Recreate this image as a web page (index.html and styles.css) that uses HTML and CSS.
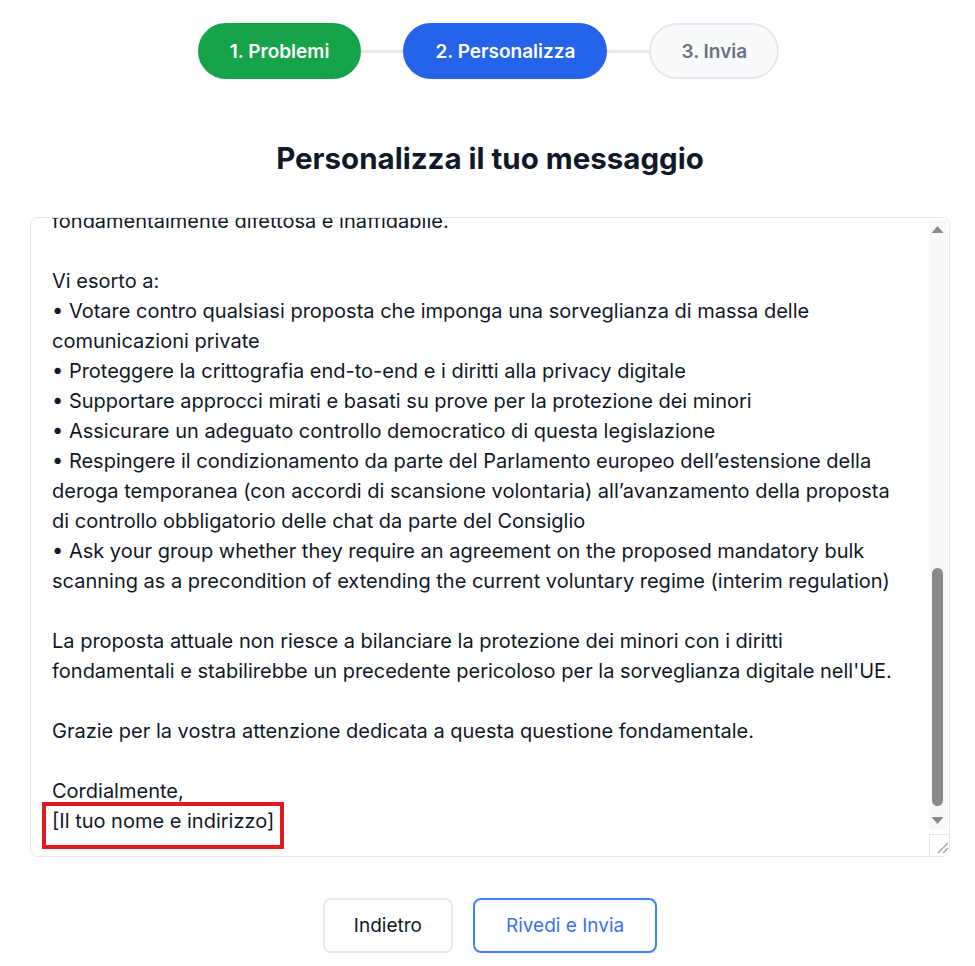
FILE: index.html
```html
<!DOCTYPE html>
<html lang="it">
<head>
<meta charset="UTF-8">
<meta name="viewport" content="width=device-width, initial-scale=1.0">
<title>Personalizza il tuo messaggio</title>
<link rel="stylesheet" href="styles.css">
</head>
<body>

<div class="steps">
  <div class="step done">1. Problemi</div>
  <div class="step-line"></div>
  <div class="step active">2. Personalizza</div>
  <div class="step-line"></div>
  <div class="step">3. Invia</div>
</div>

<h1 class="title">Personalizza il tuo messaggio</h1>

<div class="editor">
<textarea id="message" class="message" spellcheck="false">Gentile Membro del Parlamento europeo,

Le scrivo in qualità di cittadino/a preoccupato/a per la proposta di regolamento dell'UE volto a prevenire e combattere gli abusi sessuali sui minori (CSAR), spesso chiamata "Chat Control".

Pur condividendo pienamente l'obiettivo di proteggere i minori, ritengo che questa proposta, nella sua forma attuale, rappresenti una grave minaccia per i diritti fondamentali di tutti i cittadini europei.

La proposta imporrebbe la scansione automatica di tutte le comunicazioni private, compresi i messaggi cifrati end-to-end, trasformando di fatto ogni dispositivo in uno strumento di sorveglianza. Ciò comprometterebbe la sicurezza della crittografia, da cui dipendono giornalisti, medici, avvocati, imprese e le stesse istituzioni.

Esperti di sicurezza informatica, autorità per la protezione dei dati e il Servizio giuridico del Consiglio hanno espresso seri dubbi sulla compatibilità della proposta con la Carta dei diritti fondamentali dell'UE.

Inoltre, la tecnologia di rilevamento proposta genererebbe un numero enorme di falsi positivi, sommergendo le forze dell'ordine di segnalazioni inutili. La tecnologia è
fondamentalmente difettosa e inaffidabile.

Vi esorto a:
• Votare contro qualsiasi proposta che imponga una sorveglianza di massa delle comunicazioni private
• Proteggere la crittografia end-to-end e i diritti alla privacy digitale
• Supportare approcci mirati e basati su prove per la protezione dei minori
• Assicurare un adeguato controllo democratico di questa legislazione
• Respingere il condizionamento da parte del Parlamento europeo dell’estensione della deroga temporanea (con accordi di scansione volontaria) all’avanzamento della proposta di controllo obbligatorio delle chat da parte del Consiglio
• Ask your group whether they require an agreement on the proposed mandatory bulk scanning as a precondition of extending the current voluntary regime (interim regulation)

La proposta attuale non riesce a bilanciare la protezione dei minori con i diritti fondamentali e stabilirebbe un precedente pericoloso per la sorveglianza digitale nell'UE.

Grazie per la vostra attenzione dedicata a questa questione fondamentale.

Cordialmente,
[Il tuo nome e indirizzo]</textarea>
  <div class="scrollbar">
    <div class="sb-arrow">
      <svg width="17" height="17" viewBox="0 0 17 17"><polygon points="2.5,12 8.5,5 14.5,12" fill="#8a8a8a"/></svg>
    </div>
    <div class="sb-track"><div class="sb-thumb"></div></div>
    <div class="sb-arrow">
      <svg width="17" height="17" viewBox="0 0 17 17"><polygon points="2.5,5 8.5,12 14.5,5" fill="#8a8a8a"/></svg>
    </div>
    <div class="sb-corner">
      <svg width="20" height="20" viewBox="0 0 20 20"><path d="M8 18 L18 8 M13 18 L18 13" stroke="#9a9a9a" stroke-width="1.2"/></svg>
    </div>
  </div>
  <div class="highlight"></div>
</div>

<div class="actions">
  <button class="btn">Indietro</button>
  <button class="btn btn-primary">Rivedi e Invia</button>
</div>

<script>
  const message = document.getElementById('message');
  message.scrollTop = message.scrollHeight;
</script>

</body>
</html>
```

FILE: styles.css
```css
body {
  margin: 0;
  padding: 23px 25px 0 30px;
  background-color: #fff;
  font-family: Inter, "Liberation Sans", Arial, sans-serif;
  color: #111827;
}
.steps {
  display: flex;
  justify-content: center;
  align-items: center;
  margin-left: -3px;
}
.step {
  height: 56px;
  box-sizing: border-box;
  padding: 0 30px;
  border-radius: 28px;
  display: flex;
  align-items: center;
  font-size: 19px;
  font-weight: 600;
  color: #6b7280;
  background-color: #f9fafb;
  border: solid 2px #e5e7eb;
}
.step.done {
  background-color: #16a34a;
  border-color: #16a34a;
  color: #fff;
}
.step.active {
  background-color: #2563eb;
  border-color: #2563eb;
  color: #fff;
}
.step-line {
  width: 42px;
  height: 3px;
  background-color: #e5e7eb;
}
.title {
  margin: 61px 0 41px;
  text-align: center;
  font-size: 29.5px;
  line-height: 36px;
  font-weight: 700;
}
.editor {
  position: relative;
}
.message {
  display: block;
  width: 100%;
  height: 640px;
  box-sizing: border-box;
  margin: 0;
  padding: 8px 54px 20px 21px;
  border: solid 1px #e5e7eb;
  border-radius: 8px;
  font-family: Inter, "Liberation Sans", Arial, sans-serif;
  font-size: 20px;
  line-height: 30px;
  color: #111827;
  resize: none;
  outline: none;
  scrollbar-width: none;
}
.scrollbar {
  position: absolute;
  top: 4px;
  right: 1px;
  bottom: 1px;
  width: 20px;
  display: flex;
  flex-direction: column;
  align-items: flex-end;
}
.sb-arrow {
  width: 17px;
  height: 17px;
  margin-right: 3px;
  background-color: #f8f8f8;
}
.sb-arrow svg {
  display: block;
}
.sb-track {
  flex: 1;
  width: 17px;
  margin-right: 3px;
  box-sizing: border-box;
  padding: 0 3px 6px;
  background-color: #f8f8f8;
  display: flex;
  flex-direction: column;
  justify-content: flex-end;
}
.sb-thumb {
  height: 238px;
  border-radius: 6px;
  background-color: #8a8a8a;
}
.sb-corner {
  width: 20px;
  height: 22px;
  margin-top: 5px;
  box-sizing: border-box;
  border-top: solid 1px #e5e7eb;
  border-left: solid 1px #e5e7eb;
  background-color: #fff;
}
.sb-corner svg {
  display: block;
}
.highlight {
  position: absolute;
  left: 12px;
  top: 585px;
  width: 242px;
  height: 47px;
  box-sizing: border-box;
  border: solid 4px #e3171f;
  pointer-events: none;
}
.actions {
  display: flex;
  justify-content: center;
  gap: 20px;
  margin-top: 41px;
}
.btn {
  height: 55px;
  padding: 0 29px;
  background-color: #fff;
  border: solid 2px #e5e7eb;
  border-radius: 8px;
  font-family: Inter, "Liberation Sans", Arial, sans-serif;
  font-size: 19px;
  color: #111827;
  cursor: pointer;
}
.btn-primary {
  padding: 0 31px;
  border-color: #3b82f6;
  color: #3b6ff0;
}
```
